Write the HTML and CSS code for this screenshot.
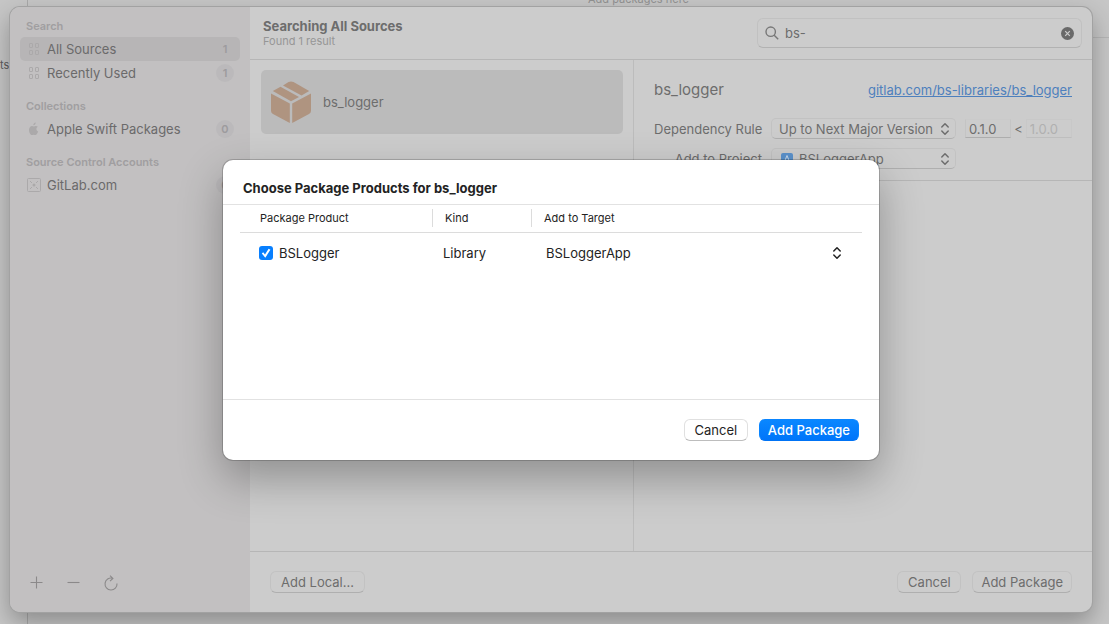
FILE: index.html
```html
<!DOCTYPE html>
<html lang="en">
<head>
<meta charset="utf-8">
<meta name="viewport" content="width=device-width, initial-scale=1">
<title>Add Package</title>
<link rel="stylesheet" href="styles.css">
</head>
<body>
<svg class="sprite" aria-hidden="true">
  <symbol id="grid" viewBox="0 0 14 14"><g fill="none" stroke="currentColor"><rect x="2.5" y="1.5" width="3" height="4" rx=".5"/><rect x="8.5" y="1.5" width="3" height="4" rx=".5"/><rect x="2.5" y="8.5" width="3" height="4" rx=".5"/><rect x="8.5" y="8.5" width="3" height="4" rx=".5"/></g></symbol>
  <symbol id="updown" viewBox="0 0 10 14"><path d="M1.8 5 5 1.8 8.2 5M1.8 9 5 12.2 8.2 9" fill="none" stroke="currentColor" stroke-width="1.5" stroke-linecap="round" stroke-linejoin="round"/></symbol>
</svg>
<div class="backdrop" aria-hidden="true">
  <span class="backdrop-side">ts</span>
  <span class="backdrop-hint">Add packages here</span>
</div>
<div class="window">
  <aside class="sidebar">
    <nav class="sources">
      <section>
        <h2 class="group-title">Search</h2>
        <a class="source selected" href="#all"><svg class="source-icon"><use href="#grid"/></svg><span class="source-name">All Sources</span><span class="count">1</span></a>
        <a class="source" href="#recent"><svg class="source-icon"><use href="#grid"/></svg><span class="source-name">Recently Used</span><span class="count">1</span></a>
      </section>
      <section>
        <h2 class="group-title">Collections</h2>
        <a class="source" href="#apple"><svg class="source-icon" viewBox="0 0 14 14"><path fill="currentColor" d="M8.700.5c.1 1.500-1 2.700-2.400 2.700C6.200 1.800 7.400.7 8.700.5ZM10.800 4.700C9.800 5.300 9.400 6.100 9.400 7.100c0 1.200.7 2.100 1.700 2.500-.5 1.500-1.500 3.500-2.700 3.500-.6 0-1-.4-1.700-.4s-1.200.4-1.800.4C3.500 13.100 2 10.400 2 8c0-2.400 1.400-4.100 3-4.100.8 0 1.300.5 1.900.5s1.200-.5 2-.5 1.500.3 1.900.8Z"/></svg><span class="source-name">Apple Swift Packages</span><span class="count">0</span></a>
      </section>
      <section>
        <h2 class="group-title">Source Control Accounts</h2>
        <a class="source" href="#gitlab"><svg class="source-icon" viewBox="0 0 14 14"><rect x=".5" y=".5" width="13" height="13" rx="1" fill="none" stroke="currentColor"/><path d="m3 3 2 2m6-2L9 5M3 11l2-2m6 2L9 9" stroke="currentColor"/><circle cx="7" cy="7" r="1.5" fill="currentColor"/></svg><span class="source-name">GitLab.com</span><span class="count">0</span></a>
      </section>
    </nav>
    <div class="sidebar-tools">
      <button class="tool" type="button" aria-label="Add"><svg viewBox="0 0 16 16"><path d="M7.500 1.500v12M1.500 7.500h12"/></svg></button>
      <button class="tool" type="button" aria-label="Remove"><svg viewBox="0 0 16 16"><path d="M1.500 7.500h12"/></svg></button>
      <button class="tool" type="button" aria-label="Refresh"><svg viewBox="0 0 16 16"><path d="M9.500 3.200A6 6 0 1 0 14 8.500M7 .7 9.900 3.400 7 6.200"/></svg></button>
    </div>
  </aside>
  <main class="main">
    <header class="toolbar">
      <div class="heading">
        <h1 class="title">Searching All Sources</h1>
        <p class="subtitle">Found 1 result</p>
      </div>
      <div class="search">
        <svg class="search-icon" viewBox="0 0 14 14"><circle cx="5.700" cy="5.700" r="4.700"/><path d="m9.200 9.200 4 4"/></svg>
        <input class="search-input" type="text" aria-label="Search packages" value="bs-">
        <button class="clear" type="button" aria-label="Clear search"><svg viewBox="0 0 13 13"><circle cx="6.500" cy="6.500" r="6.500" fill="#696969"/><path d="m4.200 4.200 4.600 4.600m0-4.600L4.200 8.800" stroke="#ccc" stroke-width="1.200"/></svg></button>
      </div>
    </header>
    <div class="content">
      <div class="results">
        <button class="result" type="button">
          <svg class="box-icon" viewBox="0 0 40 42"><g fill="#af9480"><path d="M0 12.500 18.800 22.500V42L2 33Q0 32 0 30Z"/><path d="M40 12.500 21.200 22.500V42L38 33Q40 32 40 30Z"/><path d="M1.800 10 9.500 5.800 28 16 20 20.200Z"/><path d="m12 4.500 5.500-3.400Q20-.3 22.500 1.100L38.200 10 30.500 14.500Z"/></g></svg>
          <span>bs_logger</span>
        </button>
      </div>
      <section class="detail">
        <div class="package">
          <div class="package-head">
            <h2 class="package-name">bs_logger</h2>
            <a class="package-link" href="#repo">gitlab.com/bs-libraries/bs_logger</a>
          </div>
          <div class="form">
            <label class="form-label" for="rule">Dependency Rule</label>
            <div class="popup">
              <select id="rule"><option>Up to Next Major Version</option></select>
              <svg class="arrows"><use href="#updown"/></svg>
            </div>
            <div class="range">
              <input class="version" type="text" aria-label="Minimum version" value="0.1.0">
              <span>&lt;</span>
              <input class="version" type="text" aria-label="Maximum version" value="1.0.0" disabled>
            </div>
            <label class="form-label" for="project">Add to Project</label>
            <div class="popup with-icon">
              <svg class="project-icon" viewBox="0 0 12 12"><rect width="12" height="12" rx="2" fill="#5b92cc"/><path d="M3 10 6 2.500 9 10M2 7.500h8" fill="none" stroke="#c9dbee"/></svg>
              <select id="project"><option>BSLoggerApp</option></select>
              <svg class="arrows"><use href="#updown"/></svg>
            </div>
          </div>
        </div>
      </section>
    </div>
    <footer class="footer">
      <button class="button local" type="button">Add Local...</button>
      <button class="button" type="button">Cancel</button>
      <button class="button" type="button">Add Package</button>
    </footer>
  </main>
  <div class="overlay">
    <div class="dialog" role="dialog" aria-labelledby="dialog-title">
      <h2 class="dialog-title" id="dialog-title">Choose Package Products for bs_logger</h2>
      <div class="dialog-body">
        <table class="products">
          <thead><tr><th class="col-product"><span>Package Product</span></th><th class="col-kind"><span>Kind</span></th><th><span>Add to Target</span></th></tr></thead>
          <tbody><tr>
            <td class="cell-product"><label class="check"><input type="checkbox" checked>BSLogger</label></td>
            <td class="cell-kind">Library</td>
            <td class="cell-target"><div class="target"><select aria-label="Add to Target"><option>BSLoggerApp</option></select><svg class="arrows"><use href="#updown"/></svg></div></td>
          </tr></tbody>
        </table>
      </div>
      <div class="dialog-actions">
        <button class="button light" type="button">Cancel</button>
        <button class="button primary" type="button">Add Package</button>
      </div>
    </div>
  </div>
</div>
</body>
</html>
```

FILE: styles.css
```css
* { box-sizing: border-box; }

body {
  margin: 0;
  min-height: 100vh;
  display: flex;
  padding: 7px 17px 12px 10px;
  overflow: hidden;
  position: relative;
  background: #c6c6c6;
  color: #6d6d6d;
  font: 13px/16px Inter, "Liberation Sans", sans-serif;
}

h1, h2, p { margin: 0; }
button, input, select { font: inherit; color: inherit; margin: 0; }
button { border: 0; padding: 0; background: none; }
a { color: inherit; text-decoration: none; }
svg { display: block; flex: none; }
.sprite { position: absolute; width: 0; height: 0; }

.backdrop {
  position: absolute;
  inset: 0;
  background:
    linear-gradient(#a9a9a9, #a9a9a9) 27px 0 / 1px 100% no-repeat,
    linear-gradient(#b5b5b5, #b5b5b5) 100% 37px / 24px 1px no-repeat;
}
.backdrop-side { position: absolute; left: 0; top: 57px; font-size: 11px; color: #5c5c5c; }
.backdrop-hint { position: absolute; left: 588px; top: -9px; font-size: 11px; color: #929292; }

.window {
  position: relative;
  flex: 1;
  display: flex;
  min-width: 0;
  border-radius: 10px;
  background: #ccc;
  box-shadow: 0 0 0 1px #a2a2a2, 0 10px 24px rgba(0, 0, 0, .3);
}

.sidebar {
  width: 240px;
  flex: none;
  display: flex;
  flex-direction: column;
  justify-content: space-between;
  padding: 8px 0 19px 10px;
  border-radius: 10px 0 0 10px;
  background: #c2c0c1;
}
.sources { display: flex; flex-direction: column; gap: 10px; padding-right: 10px; }
.group-title {
  padding: 0 6px;
  font-size: 11px;
  line-height: 22px;
  font-weight: 600;
  color: #a09ea0;
}
.source {
  display: flex;
  align-items: center;
  gap: 6px;
  height: 24px;
  padding: 0 6px 0 7px;
  border-radius: 5px;
  color: #6b6a6b;
}
.source.selected { background: #b7b5b6; }
.source-icon { width: 14px; height: 14px; color: #aba9aa; }
.source-name { flex: 1; }
.count {
  width: 18px;
  border-radius: 9px;
  font-size: 11px;
  line-height: 18px;
  font-weight: 600;
  text-align: center;
  color: #9d9b9e;
  background: #bbb9bb;
}
.selected .count { background: none; }
.sidebar-tools { display: flex; gap: 21px; padding-left: 9px; }
.tool svg { width: 16px; height: 20px; fill: none; stroke: #8b898a; stroke-width: 1.1; }

.main { flex: 1; min-width: 0; display: flex; flex-direction: column; }
.toolbar {
  display: flex;
  justify-content: space-between;
  align-items: center;
  padding: 11px 10px 11px 13px;
  border-bottom: 1px solid #b6b6b6;
}
.title { font-size: 13px; line-height: 16px; font-weight: 700; }
.subtitle { font-size: 11px; line-height: 14px; color: #969696; }
.search {
  display: flex;
  align-items: center;
  gap: 6px;
  width: 325px;
  height: 30px;
  padding: 0 7px;
  border: 1px solid #c1c1c1;
  border-bottom-color: #b2b2b2;
  border-radius: 6px;
}
.search-icon { width: 14px; height: 14px; fill: none; stroke: #777; stroke-width: 1.4; }
.search-input { flex: 1; min-width: 0; padding: 0; border: 0; outline: 0; background: none; }
.clear svg { width: 13px; height: 13px; }

.content { flex: 1; display: grid; grid-template-columns: 383px minmax(0, 1fr); }
.results { padding: 10px; padding-left: 11px; }
.result {
  display: flex;
  align-items: center;
  gap: 12px;
  width: 100%;
  height: 64px;
  padding: 0 10px;
  border-radius: 5px;
  background: #bbb;
  text-align: left;
}
.box-icon { width: 40px; height: 42px; }
.detail { border-left: 1px solid #bcbcbc; }
.package {
  display: flex;
  flex-direction: column;
  gap: 17px;
  padding: 19px 20px 11px;
  border-bottom: 1px solid #b6b6b6;
}
.package-head { display: flex; justify-content: space-between; align-items: center; }
.package-name { font-size: 15px; line-height: 22px; font-weight: 400; }
.package-link { color: #4e80bd; text-decoration: underline; }
.form {
  display: grid;
  grid-template-columns: minmax(0, 1fr) 185px 107px;
  column-gap: 9px;
  row-gap: 9px;
  align-items: center;
}
.form-label { text-align: right; white-space: nowrap; }
.popup {
  display: grid;
  grid-template-columns: minmax(0, 1fr) 10px;
  align-items: center;
  height: 21px;
  padding: 0 5px 0 7px;
  border: 1px solid #c2c2c2;
  border-bottom-color: #afafaf;
  border-radius: 5px;
}
.popup.with-icon { grid-template-columns: 12px minmax(0, 1fr) 10px; column-gap: 6px; padding-left: 9px; }
select { appearance: none; width: 100%; padding: 0; border: 0; outline: 0; background: none; }
.arrows { width: 10px; height: 14px; }
.project-icon { width: 12px; height: 12px; }
.range { display: flex; align-items: center; gap: 3px; }
.version {
  flex: 1;
  min-width: 0;
  height: 19px;
  padding: 0 3px;
  border: 1px solid #c4c4c4;
  border-top-color: #cacaca;
  border-bottom-color: #adadad;
  outline: 0;
  background: none;
}
.version:disabled { color: #b0b0b0; border-color: #c8c8c8; border-bottom-color: #bebebe; }

.footer {
  display: flex;
  gap: 11px;
  padding: 19px 20px;
  border-top: 1px solid #b6b6b6;
}
.button {
  min-width: 64px;
  height: 22px;
  padding: 0 8px;
  border: 1px solid #c2c2c2;
  border-bottom-color: #afafaf;
  border-radius: 6px;
  line-height: 18px;
}
.local { margin-right: auto; padding: 0 10px; }

.overlay {
  position: absolute;
  inset: 0;
  display: flex;
  align-items: center;
  justify-content: center;
  overflow: hidden;
  border-radius: 10px;
}
.dialog {
  width: 656px;
  border-radius: 10px;
  background: #fff;
  color: #232323;
  box-shadow: 0 0 0 1px rgba(0, 0, 0, .18), 0 18px 44px rgba(0, 0, 0, .3);
}
.dialog-title {
  padding: 20px 20px 8px;
  border-bottom: 1px solid #e2e2e2;
  font-size: 13px;
  line-height: 16px;
  font-weight: 700;
}
.dialog-body { min-height: 194px; padding: 0 17px; }
.products { width: 100%; table-layout: fixed; border-collapse: collapse; text-align: left; }
.products th {
  height: 28px;
  padding: 0;
  border-bottom: 1px solid #dcdcdc;
  font-size: 11px;
  line-height: 18px;
  font-weight: 400;
}
.products th span { display: block; padding-left: 12px; border-left: 1px solid #dcdcdc; }
.products th.col-product span { padding-left: 20px; border: 0; }
.col-product { width: 192px; }
.col-kind { width: 99px; }
.products td { height: 41px; padding: 0; }
.products .cell-product { padding-left: 19px; }
.products .cell-kind { padding-left: 11px; }
.products .cell-target { padding-left: 15px; }
.check { display: flex; align-items: center; gap: 6px; }
.check input {
  appearance: none;
  width: 14px;
  height: 14px;
  border-radius: 3px;
  background: #087ffe;
  display: grid;
  place-items: center;
}
.check input:checked::before {
  content: "";
  width: 10px;
  height: 10px;
  background: #fff;
  clip-path: polygon(8% 52%, 22% 40%, 40% 62%, 76% 4%, 94% 16%, 43% 94%);
}
.target { display: flex; align-items: center; padding-right: 20px; }
.dialog-actions {
  display: flex;
  justify-content: flex-end;
  gap: 11px;
  padding: 19px 20px;
  border-top: 1px solid #e2e2e2;
}
.light { border-color: #e0e0e0; border-bottom-color: #bdbdbd; background: #fff; }
.primary { border-color: #0a85ff; border-bottom-color: #0073f5; background: linear-gradient(#0a87ff, #0075fa); color: #fff; font-weight: 500; }
```
